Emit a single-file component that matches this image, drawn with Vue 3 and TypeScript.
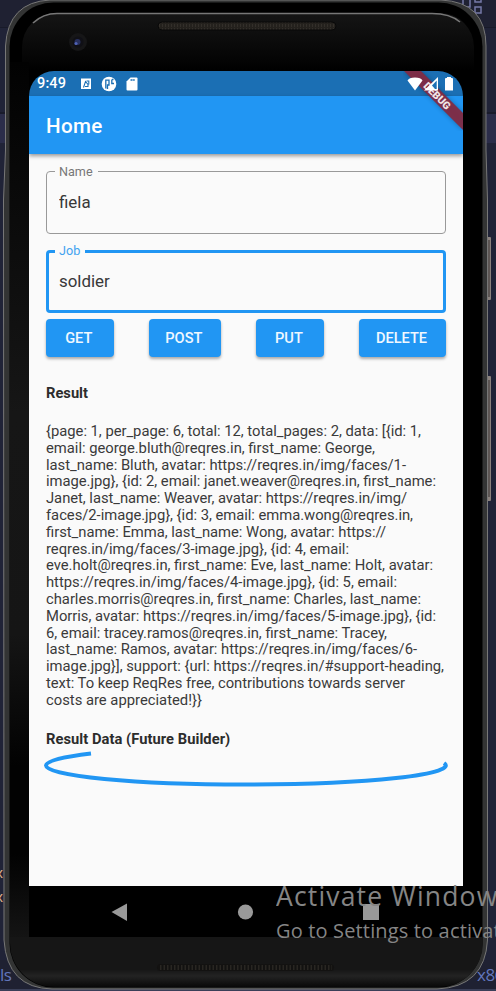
<script setup lang="ts">
import { ref } from 'vue'

interface Line {
  text: string
  width: number
}

const name = ref('fiela')
const job = ref('soldier')
const actions: { label: string; size: string }[] = [
  { label: 'GET', size: 'get' },
  { label: 'POST', size: 'post' },
  { label: 'PUT', size: 'put' },
  { label: 'DELETE', size: 'delete' },
]

const lines: Line[] = [
  { text: '{page: 1, per_page: 6, total: 12, total_pages: 2, data: [{id: 1,', width: 375 },
  { text: 'email: george.bluth@reqres.in, first_name: George,', width: 329 },
  { text: 'last_name: Bluth, avatar: https://reqres.in/img/faces/1-', width: 360 },
  { text: 'image.jpg}, {id: 2, email: janet.weaver@reqres.in, first_name:', width: 390 },
  { text: 'Janet, last_name: Weaver, avatar: https://reqres.in/img/', width: 361 },
  { text: 'faces/2-image.jpg}, {id: 3, email: emma.wong@reqres.in,', width: 367 },
  { text: 'first_name: Emma, last_name: Wong, avatar: https://', width: 340 },
  { text: 'reqres.in/img/faces/3-image.jpg}, {id: 4, email:', width: 303 },
  { text: 'eve.holt@reqres.in, first_name: Eve, last_name: Holt, avatar:', width: 387 },
  { text: 'https://reqres.in/img/faces/4-image.jpg}, {id: 5, email:', width: 351 },
  { text: 'charles.morris@reqres.in, first_name: Charles, last_name:', width: 375 },
  { text: 'Morris, avatar: https://reqres.in/img/faces/5-image.jpg}, {id:', width: 390 },
  { text: '6, email: tracey.ramos@reqres.in, first_name: Tracey,', width: 341 },
  { text: 'last_name: Ramos, avatar: https://reqres.in/img/faces/6-', width: 371 },
  { text: 'image.jpg}], support: {url: https://reqres.in/#support-heading,', width: 398 },
  { text: 'text: To keep ReqRes free, contributions towards server', width: 359 },
  { text: 'costs are appreciated!}}', width: 156 },
]
</script>

<template>
  <div class="desktop">
    <svg class="backdrop" width="496" height="991" viewBox="0 0 496 991">
      <rect width="496" height="991" fill="#202337" />
      <rect width="496" height="27" fill="#1f2132" />
      <rect y="27" width="496" height="1" fill="#181a29" />
      <rect y="112" width="496" height="2" fill="#191b2b" />
      <rect y="114" width="496" height="29" fill="#2b2d4a" />
      <rect y="960" width="496" height="29" fill="#1f2132" />
      <rect y="989" width="496" height="2" fill="#3a3f58" />
      <g fill="none" stroke="#7779a8" stroke-width="1.5">
        <path d="M463 -1V7H470V-1M475 -4h6v6h-6zM475 7h6v6h-6z" />
      </g>
      <text x="-5" y="878" class="code">x</text>
      <text x="-5" y="902" class="code">x</text>
      <text x="0" y="981" class="hint">ls</text>
      <text x="477" y="981" class="hint">x86</text>
      <rect x="487" y="237" width="4" height="63" rx="1" fill="#8a817d" />
      <rect x="488" y="240" width="2" height="57" fill="#5d5654" />
      <rect x="487" y="376" width="4" height="125" rx="1" fill="#8a817d" />
      <rect x="488" y="380" width="2" height="117" fill="#5d5654" />
    </svg>

    <svg class="shell" width="496" height="991" viewBox="0 0 496 991">
      <defs>
        <linearGradient id="topGlass" x1="0" y1="0" x2="0" y2="1">
          <stop offset="0" stop-color="#151515" />
          <stop offset="0.05" stop-color="#040404" />
          <stop offset="0.06" stop-color="#000" />
          <stop offset="1" stop-color="#000" />
        </linearGradient>
        <linearGradient id="leftGlass" x1="0" y1="0" x2="0" y2="1">
          <stop offset="0" stop-color="#020202" />
          <stop offset="0.4" stop-color="#161616" />
          <stop offset="0.65" stop-color="#151515" />
          <stop offset="0.8" stop-color="#020202" />
          <stop offset="0.9" stop-color="#020202" />
          <stop offset="1" stop-color="#151515" />
        </linearGradient>
        <linearGradient id="chin" x1="0" y1="0" x2="0" y2="1">
          <stop offset="0" stop-color="#161616" />
          <stop offset="0.65" stop-color="#161616" />
          <stop offset="0.78" stop-color="#232323" />
          <stop offset="1" stop-color="#080808" />
        </linearGradient>
        <pattern id="mesh" width="3" height="4" patternUnits="userSpaceOnUse">
          <rect width="3" height="4" fill="#24211d" />
          <rect width="1" height="3" fill="#332f2a" />
        </pattern>
        <clipPath id="body"><rect x="10" y="3" width="473" height="984" rx="44" /></clipPath>
      </defs>
      <path d="M50 0H441Q486 2 486 46V150L487.500 200V940Q485 987 437 989H52Q7 988 4 940L3.500 200L5.500 150V46Q8 2 50 0Z" fill="#333434" stroke="#777" stroke-width="1" />
      <rect x="9.500" y="2.500" width="473" height="985" rx="44" fill="#000" />
      <g clip-path="url(#body)">
        <rect x="22" y="13" width="452" height="960" rx="34" fill="url(#topGlass)" />
        <rect x="10" y="62" width="19" height="880" fill="url(#leftGlass)" />
        <rect x="10" y="937" width="473" height="50" fill="url(#chin)" />
      </g>
      <path d="M33 23Q43 13.500 57 13.500H432Q450 13.500 460 22" fill="none" stroke="#777" stroke-width="1.600" />
      <rect x="158" y="22" width="178" height="8" rx="4" fill="url(#mesh)" stroke="#080808" />
      <rect x="157" y="964" width="177" height="7" rx="3.500" fill="#131211" />
      <path d="M160 967.500H332" stroke="#292622" stroke-width="5" stroke-dasharray="1.500 2" />
      <circle cx="78" cy="42" r="9" fill="#161617" />
      <circle cx="78" cy="42" r="5.500" fill="#101016" />
      <circle cx="77.500" cy="42" r="3" fill="#28305d" />
      <circle cx="76" cy="43.500" r="1.600" fill="#4f62b5" />
    </svg>

    <main class="screen">
      <header class="status">
        <span class="clock">9:49</span>
        <svg class="notices" width="60" height="16" viewBox="0 0 60 16">
          <path d="M1 2.500H11V13H1Z" fill="#fff" />
          <path d="M3.500 11.500L5.500 5.500L8 8.500V10.500H5M6.500 5H8.800V8.500" fill="none" stroke="#1b6fb4" stroke-width="1.100" />
          <circle cx="29" cy="8" r="7.300" fill="#fff" />
          <path d="M25.800 12.500V4.200H29V9H27.500V13M31.800 3.500V7.500H34M32 3.500h1.500" fill="none" stroke="#1b6fb4" stroke-width="1.300" />
          <path d="M50.500 1.500H56.500Q57.500 1.500 57.500 2.500V13.500Q57.500 14.500 56.500 14.500H47.500Q46.500 14.500 46.500 13.500V5.500Z" fill="#fff" />
          <path d="M50.500 4H55" stroke="#1b6fb4" stroke-width="1.600" stroke-dasharray="1.500 .4" />
        </svg>
        <svg class="signals" width="48" height="16" viewBox="0 0 48 16">
          <path d="M0.500 4.500Q2 1.500 8 1.500T15.500 4.500L8 14.500Z" fill="#fff" />
          <path d="M31 1V14.500H17Z" fill="#fff" />
          <path d="M29.700 4.500V13H28L25 9.500Z" fill="#1b6fb4" />
          <path d="M38 3Q38 2 39 2H40V1H44V2H45Q46 2 46 3V14.500H38Z" fill="#fff" />
        </svg>
      </header>
      <div class="appbar"><h1>Home</h1></div>
      <svg class="ribbon" width="60" height="60" viewBox="0 0 60 60">
        <defs>
          <filter id="soft" x="-20%" y="-20%" width="140%" height="140%"><feGaussianBlur stdDeviation="2.500" /></filter>
        </defs>
        <path d="M1 0H18L60 42V59Z" fill="#000" opacity=".3" filter="url(#soft)" />
        <path d="M1 0H18L60 42V59Z" fill="#842a42" opacity=".93" />
        <text x="34" y="25" transform="rotate(45 34 25)" text-anchor="middle" dominant-baseline="central">DEBUG</text>
      </svg>

      <section class="content">
        <label class="field">
          <span>Name</span>
          <input v-model="name" type="text" />
        </label>
        <label class="field focused">
          <span>Job</span>
          <input v-model="job" type="text" />
        </label>
        <div class="actions">
          <button v-for="a in actions" :key="a.label" :class="a.size">{{ a.label }}</button>
        </div>
        <h2>Result</h2>
        <div class="response">
          <svg v-for="(line, i) in lines" :key="i" width="410" height="16.800">
            <text x="0" y="13" :textLength="line.width">{{ line.text }}</text>
          </svg>
        </div>
        <h2 class="future">Result Data (Future Builder)</h2>
        <svg class="progress" width="408" height="44" viewBox="0 0 408 44">
          <path d="M49 9.500A199.500 19 0 0 0 4 21.500A199.500 19 0 0 0 203.500 40.500A199.500 19 0 0 0 402 19" fill="none" stroke="#2196f3" stroke-width="4" />
        </svg>
      </section>

      <nav class="navbar">
        <svg width="434" height="51" viewBox="0 0 434 51" fill="#999">
          <path d="M82.500 26L98 17.500V35Z" />
          <circle cx="216.500" cy="26" r="7.600" />
          <rect x="334" y="18" width="16" height="16" />
        </svg>
      </nav>
    </main>

    <svg class="watermark" width="220" height="70" viewBox="0 0 220 70">
      <text x="0" y="31" font-size="26.500" textLength="235">Activate Windows</text>
      <text x="0" y="62.500" font-size="20" textLength="333">Go to Settings to activate Windows.</text>
    </svg>
  </div>
</template>

<style>
body {
  margin: 0;
  background: #202337;
}
</style>

<style scoped>
.desktop {
  position: relative;
  box-sizing: border-box;
  width: 496px;
  height: 991px;
  padding: 71px 33px 54px 29px;
  overflow: hidden;
  font-family: Roboto, sans-serif;
}
.backdrop,
.shell {
  position: absolute;
  top: 0;
  left: 0;
}
.code {
  fill: #e0b48a;
  font: 14px 'Liberation Mono', monospace;
}
.hint {
  fill: #6377bd;
  font: 17px 'Open Sans', sans-serif;
  letter-spacing: -0.5px;
}
.screen {
  position: relative;
  display: flex;
  flex-direction: column;
  width: 434px;
  height: 866px;
  overflow: hidden;
  background: #000;
  border-radius: 25px;
}
.status {
  display: flex;
  flex: none;
  align-items: center;
  height: 25px;
  box-sizing: border-box;
  padding: 0 8px;
  background: #1b6fb4;
  color: #fff;
}
.clock {
  width: 43px;
  padding-top: 1px;
  font-size: 14.5px;
  font-weight: 500;
  line-height: 24px;
  letter-spacing: 0.15px;
}
.signals {
  position: relative;
  z-index: 2;
  margin-left: auto;
}
.appbar {
  position: relative;
  z-index: 1;
  display: flex;
  flex: none;
  align-items: center;
  height: 58px;
  padding-left: 17px;
  background: #2196f3;
  box-shadow: 0 2px 4px rgba(0, 0, 0, 0.4);
}
h1 {
  margin: 2px 0 0;
  color: #fff;
  font-size: 20.6px;
  font-weight: 500;
  letter-spacing: 0.3px;
}
.ribbon {
  position: absolute;
  z-index: 1;
  top: 0;
  right: 0;
}
.ribbon text {
  fill: #f0e4e7;
  font-size: 10.5px;
  font-weight: 900;
}
.content {
  flex: 1;
  padding: 17px 17px 0;
  background: #fafafa;
}
.field {
  position: relative;
  display: flex;
  box-sizing: border-box;
  height: 63px;
  margin-bottom: 16px;
  padding-left: 12px;
  border: 1px solid #999;
  border-radius: 4px;
}
.field span {
  position: absolute;
  top: -8px;
  left: 8px;
  padding: 0 5px 0 4px;
  background: #fafafa;
  color: #777;
  font-size: 12.6px;
  line-height: 15px;
}
.field input {
  width: 100%;
  padding: 0 0 2px;
  border: 0;
  outline: 0;
  background: none;
  color: #383838;
  font: 16.9px Roboto, sans-serif;
}
.focused {
  margin-bottom: 6px;
  padding-left: 10px;
  border: 3px solid #2196f3;
}
.focused span {
  top: -10px;
  left: 6px;
  color: #42a2f0;
}
.actions {
  display: flex;
  justify-content: space-between;
  width: 400px;
}
.actions button {
  height: 38px;
  padding: 0 2px 0 0;
  border: 0;
  border-radius: 4px;
  background: #2196f3;
  box-shadow: 0 2px 3px rgba(0, 0, 0, 0.32);
  color: #f0f8ff;
  font: 500 14.6px Roboto, sans-serif;
}
.actions .get,
.actions .put {
  width: 67.5px;
}
.actions .post {
  width: 72px;
}
.actions .delete {
  width: 87px;
}
h2 {
  margin: 27px 0 0;
  color: #2c2c2c;
  font-size: 14.7px;
  font-weight: 700;
  line-height: 18px;
}
.response {
  display: flex;
  flex-direction: column;
  margin-top: 21px;
}
.response svg {
  display: block;
  flex: none;
  overflow: visible;
}
.response text {
  fill: #3a3a3a;
  font-size: 14.8px;
}
.future {
  margin-top: 21px;
  letter-spacing: 0.05px;
}
.progress {
  display: block;
  margin: -4px 0 0 -4px;
}
.navbar {
  flex: none;
  height: 51px;
  background: #000;
}
.navbar svg {
  display: block;
}
.watermark {
  position: absolute;
  top: 875px;
  left: 276px;
}
.watermark text {
  fill: #858585;
  font-family: 'Open Sans', sans-serif;
  font-weight: 400;
}
</style>
